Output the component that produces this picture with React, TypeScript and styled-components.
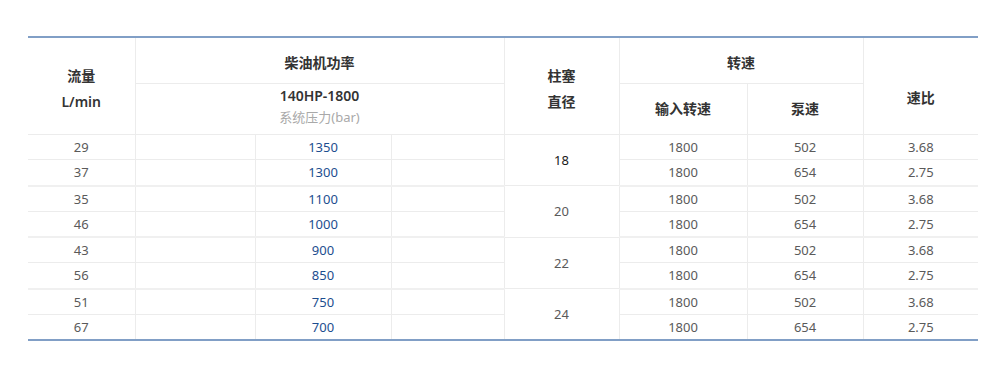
import React from 'react';
import styled, {createGlobalStyle} from "styled-components";

const GlobalStyle = createGlobalStyle`
  html, body {
    margin: 0;
    padding: 0;
    background: #fff;
  }
  body {
    font-family: "Noto Sans", "Noto Sans CJK SC", sans-serif;
  }
`;

type Row = {
    flow: number;
    pressure: number;
    plunger?: number;
    input: number;
    pump: number;
    ratio: string;
};

const rows: Row[] = [
    {flow: 29, pressure: 1350, plunger: 18, input: 1800, pump: 502, ratio: '3.68'},
    {flow: 37, pressure: 1300, input: 1800, pump: 654, ratio: '2.75'},
    {flow: 35, pressure: 1100, plunger: 20, input: 1800, pump: 502, ratio: '3.68'},
    {flow: 46, pressure: 1000, input: 1800, pump: 654, ratio: '2.75'},
    {flow: 43, pressure: 900, plunger: 22, input: 1800, pump: 502, ratio: '3.68'},
    {flow: 56, pressure: 850, input: 1800, pump: 654, ratio: '2.75'},
    {flow: 51, pressure: 750, plunger: 24, input: 1800, pump: 502, ratio: '3.68'},
    {flow: 67, pressure: 700, input: 1800, pump: 654, ratio: '2.75'},
];

const widths = [107, 120, 136, 113, 115, 128, 116, 115];

export default function App() {
    return (
        <Page>
            <GlobalStyle/>
            <SpecTable>
                <colgroup>
                    {widths.map((w, i) => <col key={i} style={{width: w}}/>)}
                </colgroup>
                <thead>
                    <HeadRow $height={46}>
                        <HeadCell rowSpan={2} $padTop={6}>流量<br/>L/min</HeadCell>
                        <HeadCell colSpan={3} $padTop={6}>柴油机功率</HeadCell>
                        <HeadCell rowSpan={2} $padTop={6}>柱塞<br/>直径</HeadCell>
                        <HeadCell colSpan={2} $padTop={6}>转速</HeadCell>
                        <HeadCell rowSpan={2} $padTop={24}>速比</HeadCell>
                    </HeadRow>
                    <HeadRow $height={51}>
                        <HeadCell colSpan={3} $padBottom={5}>
                            <MainTitle>140HP-1800</MainTitle>
                            <SubTitle>系统压力(bar)</SubTitle>
                        </HeadCell>
                        <HeadCell>输入转速</HeadCell>
                        <HeadCell>泵速</HeadCell>
                    </HeadRow>
                </thead>
                <tbody>
                    {rows.map((r, i) => (
                        <BodyRow key={i} $groupEnd={i % 2 === 1 && i < rows.length - 1}>
                            <Cell>{r.flow}</Cell>
                            <Cell/>
                            <Cell $blue>{r.pressure}</Cell>
                            <Cell/>
                            {r.plunger !== undefined &&
                                <Cell rowSpan={2} $dark={r.plunger === 18}>{r.plunger}</Cell>}
                            <Cell>{r.input}</Cell>
                            <Cell>{r.pump}</Cell>
                            <Cell $last>{r.ratio}</Cell>
                        </BodyRow>
                    ))}
                </tbody>
            </SpecTable>
        </Page>
    );
}

const Page = styled.div`
  padding: 36px 28px 0 28px;
  width: 950px;
`;

const SpecTable = styled.table`
  width: 950px;
  table-layout: fixed;
  border-collapse: collapse;
  border-top: 2px solid #819fc6;
  border-bottom: 2px solid #819fc6;
`;

const HeadRow = styled.tr<{ $height: number }>`
  height: ${p => p.$height}px;
`;

const HeadCell = styled.th<{ $padTop?: number; $padBottom?: number }>`
  padding: ${p => p.$padTop ?? 0}px 0 ${p => p.$padBottom ?? 0}px 0;
  font-size: 14px;
  font-weight: 600;
  line-height: 26px;
  color: #333;
  text-align: center;
  vertical-align: middle;
  border: 1px solid #ececec;
  border-top: none;

  &:first-child {
    border-left: none;
  }

  &:last-child {
    border-right: none;
  }
`;

const MainTitle = styled.div`
  line-height: 22px;
`;

const SubTitle = styled.div`
  font-size: 13px;
  font-weight: 400;
  line-height: 20px;
  color: #a9a9a9;
`;

const BodyRow = styled.tr<{ $groupEnd: boolean }>`
  height: 25.75px;

  td {
    border-bottom: ${p => p.$groupEnd ? '2px solid #f0f0f0' : '1px solid #ececec'};
  }
`;

const Cell = styled.td<{ $blue?: boolean; $dark?: boolean; $last?: boolean }>`
  padding: 0;
  font-size: 13px;
  line-height: 18px;
  text-align: center;
  vertical-align: middle;
  color: ${p => p.$blue ? '#1d4e8f' : p.$dark ? '#1a1a1a' : '#5a5a5a'};
  border-left: 1px solid #ececec;
  border-right: ${p => p.$last ? 'none' : '1px solid #ececec'};

  &:first-child {
    border-left: none;
  }
`;
